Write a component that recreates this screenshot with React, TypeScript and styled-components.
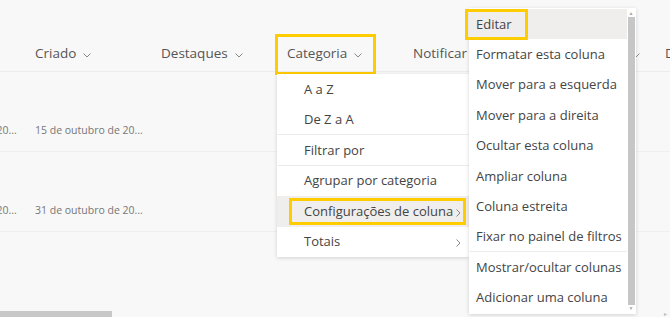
import React from "react";
import styled, { createGlobalStyle, css } from "styled-components";

const GlobalStyle = createGlobalStyle`
  html, body {
    margin: 0;
    padding: 0;
    background: #f8f8f8;
  }
  body {
    font-family: "Open Sans", "Noto Sans", sans-serif;
    -webkit-font-smoothing: antialiased;
  }
`;

const HIGHLIGHT = "#ffcc00";

const Page = styled.div`
  position: relative;
  width: 670px;
  height: 317px;
  overflow: hidden;
  background: #f8f8f8;
  display: flex;
  flex-direction: column;
`;

const Viewport = styled.div`
  flex: 1;
  overflow: hidden;
`;

const Table = styled.div`
  display: flex;
  flex-direction: column;
  margin-left: -91px;
  width: max-content;
`;

const HeaderRow = styled.div`
  display: flex;
  height: 72px;
  align-items: flex-end;
  padding-bottom: 10px;
  box-sizing: border-box;
  border-bottom: 1px solid #ececec;
`;

const HeaderCell = styled.div`
  width: 126px;
  flex: none;
  display: flex;
  align-items: center;
  height: 16px;
`;

const HeaderLabel = styled.span<{ $marked?: boolean }>`
  position: relative;
  display: inline-flex;
  align-items: center;
  gap: 7px;
  font-size: 13.5px;
  line-height: 16px;
  color: #555;
  white-space: nowrap;
  ${(p) =>
    p.$marked &&
    css`
      &::after {
        content: "";
        position: absolute;
        left: -12px;
        right: -14px;
        top: -11px;
        bottom: -14px;
        border: 3px solid ${HIGHLIGHT};
      }
    `}
`;

const Row = styled.div`
  display: flex;
  height: 80px;
  align-items: flex-end;
  padding-bottom: 14px;
  box-sizing: border-box;
  border-bottom: 1px solid #efefef;
`;

const Cell = styled.div`
  width: 126px;
  flex: none;
  font-size: 10.5px;
  line-height: 14px;
  color: #777;
  white-space: nowrap;
`;

const HScroll = styled.div`
  height: 6px;
  flex: none;
  display: flex;
  align-items: stretch;
  justify-content: space-between;
`;

const HThumb = styled.div`
  width: 112px;
  background: #c8c8c8;
`;

const HArrow = styled.span`
  font-size: 6px;
  line-height: 6px;
  color: #bbb;
  padding-right: 3px;
`;

const Menu = styled.div<{ $left: number; $top: number; $width: number }>`
  position: absolute;
  left: ${(p) => p.$left}px;
  top: ${(p) => p.$top}px;
  width: ${(p) => p.$width}px;
  background: #fff;
  box-shadow: 0 1px 4px rgba(0, 0, 0, 0.16);
  display: flex;
`;

const MenuList = styled.ul<{ $pad: number }>`
  list-style: none;
  margin: 0;
  padding: ${(p) => p.$pad}px 0;
  flex: 1;
  min-width: 0;
`;

const MenuItem = styled.li<{ $indent: number; $height: number; $active?: boolean; $divider?: boolean }>`
  display: flex;
  align-items: center;
  justify-content: space-between;
  height: ${(p) => p.$height}px;
  padding-left: ${(p) => p.$indent}px;
  padding-right: 8px;
  box-sizing: border-box;
  font-size: 13px;
  color: #444;
  white-space: nowrap;
  background: ${(p) => (p.$active ? "#efeeed" : "transparent")};
  border-bottom: 1px solid ${(p) => (p.$divider ? "#ececec" : "transparent")};
  position: relative;
`;

const ItemLabel = styled.span``;

const Marker = styled.span<{ $l: number; $r: number; $t: number; $b: number }>`
  position: absolute;
  left: ${(p) => p.$l}px;
  right: ${(p) => p.$r}px;
  top: ${(p) => p.$t}px;
  bottom: ${(p) => p.$b}px;
  border: 3px solid ${HIGHLIGHT};
  pointer-events: none;
`;

const ScrollTrack = styled.div`
  width: 9px;
  flex: none;
  display: flex;
  flex-direction: column;
  align-items: center;
  padding: 2px 1px 2px 0;
  box-sizing: border-box;
`;

const ScrollArrow = styled.span`
  font-size: 5px;
  line-height: 7px;
  color: #aaa;
`;

const ScrollThumb = styled.div`
  flex: 1;
  width: 7px;
  background: #c6c6c6;
`;

const ChevronDown = () => (
  <svg width="8" height="5" viewBox="0 0 8 5" style={{ marginTop: 5 }}>
    <polyline points="0.5,0.5 4,4 7.5,0.5" fill="none" stroke="#888" strokeWidth="1" />
  </svg>
);

const ChevronRight = () => (
  <svg width="5" height="8" viewBox="0 0 5 8" style={{ marginTop: 4 }}>
    <polyline points="0.5,0.5 4,4 0.5,7.5" fill="none" stroke="#888" strokeWidth="1" />
  </svg>
);

const columns = ["Modificado", "Criado", "Destaques", "Categoria", "Notificar", "Data de início", "Data"];

const rows = [
  ["14 de outubro de 20...", "15 de outubro de 20..."],
  ["30 de outubro de 20...", "31 de outubro de 20..."],
];

const categoryItems = [
  { label: "A a Z" },
  { label: "De Z a A", divider: true },
  { label: "Filtrar por", divider: true },
  { label: "Agrupar por categoria" },
  { label: "Configurações de coluna", sub: true, active: true, marked: true },
  { label: "Totais", sub: true },
];

const settingsItems = [
  { label: "Editar", active: true, marked: true },
  { label: "Formatar esta coluna" },
  { label: "Mover para a esquerda" },
  { label: "Mover para a direita" },
  { label: "Ocultar esta coluna" },
  { label: "Ampliar coluna" },
  { label: "Coluna estreita" },
  { label: "Fixar no painel de filtros", divider: true },
  { label: "Mostrar/ocultar colunas" },
  { label: "Adicionar uma coluna" },
];

export default function App() {
  return (
    <>
      <GlobalStyle />
      <Page>
        <Viewport>
          <Table>
            <HeaderRow>
              {columns.map((c) => (
                <HeaderCell key={c}>
                  <HeaderLabel $marked={c === "Categoria"}>
                    {c}
                    <ChevronDown />
                  </HeaderLabel>
                </HeaderCell>
              ))}
            </HeaderRow>
            {rows.map((r, i) => (
              <Row key={i}>
                {columns.map((c, j) => (
                  <Cell key={c}>{r[j] ?? ""}</Cell>
                ))}
              </Row>
            ))}
          </Table>
        </Viewport>
        <HScroll>
          <HThumb />
          <HArrow>▸</HArrow>
        </HScroll>

        <Menu $left={277} $top={74} $width={192}>
          <MenuList $pad={0}>
            {categoryItems.map((it) => (
              <MenuItem
                key={it.label}
                $indent={27}
                $height={30.5}
                $active={it.active}
                $divider={it.divider}
              >
                <ItemLabel>{it.label}</ItemLabel>
                {it.sub && <ChevronRight />}
                {it.marked && <Marker $l={12} $r={3} $t={2} $b={1} />}
              </MenuItem>
            ))}
          </MenuList>
        </Menu>

        <Menu $left={469} $top={8} $width={167}>
          <MenuList $pad={1}>
            {settingsItems.map((it) => (
              <MenuItem
                key={it.label}
                $indent={7}
                $height={30.4}
                $active={it.active}
                $divider={it.divider}
              >
                <ItemLabel>{it.label}</ItemLabel>
                {it.marked && <Marker $l={-4} $r={99} $t={0} $b={-2} />}
              </MenuItem>
            ))}
          </MenuList>
          <ScrollTrack>
            <ScrollArrow>▲</ScrollArrow>
            <ScrollThumb />
            <ScrollArrow>▼</ScrollArrow>
          </ScrollTrack>
        </Menu>
      </Page>
    </>
  );
}
